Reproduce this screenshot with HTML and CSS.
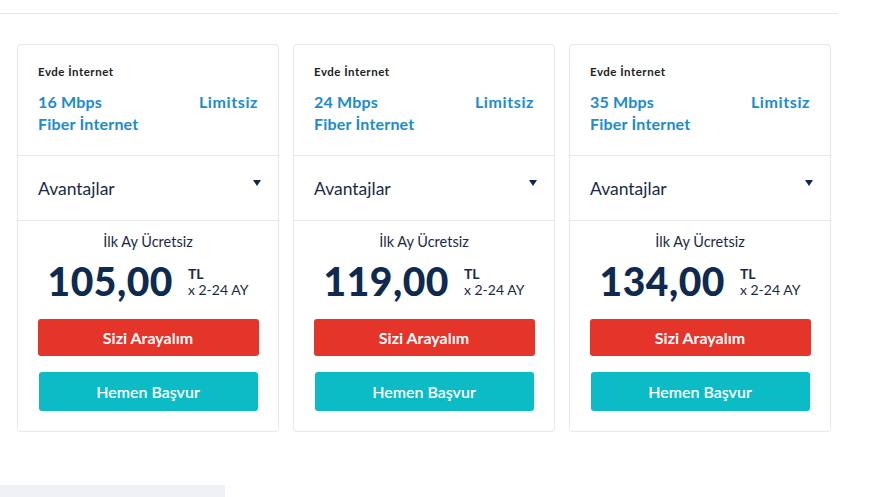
FILE: index.html
```html
<!DOCTYPE html>
<html lang="tr">
<head>
    <meta charset="UTF-8">
    <meta name="viewport" content="width=device-width, initial-scale=1.0">
    <title>Evde İnternet Paketleri</title>
    <link rel="stylesheet" href="styles.css">
</head>
<body>
<div class="page">
    <!-- Top divider -->
    <div class="top-line"></div>

    <!-- Tariff cards -->
    <div class="cards">
        <div class="card">
            <div class="card-head">
                <div class="kicker">Evde İnternet</div>
                <div class="plan">
                    <div class="plan-name">16 Mbps<br>Fiber İnternet</div>
                    <div class="plan-quota">Limitsiz</div>
                </div>
            </div>
            <div class="perks">
                <span>Avantajlar</span>
                <span class="caret"></span>
            </div>
            <div class="card-price">
                <div class="promo">İlk Ay Ücretsiz</div>
                <div class="price-row">
                    <div class="amount">105,00</div>
                    <div class="unit">
                        <b>TL</b>
                        <span>x 2-24 AY</span>
                    </div>
                </div>
                <button class="btn btn-call">Sizi Arayalım</button>
                <button class="btn btn-apply">Hemen Başvur</button>
            </div>
        </div>

        <div class="card">
            <div class="card-head">
                <div class="kicker">Evde İnternet</div>
                <div class="plan">
                    <div class="plan-name">24 Mbps<br>Fiber İnternet</div>
                    <div class="plan-quota">Limitsiz</div>
                </div>
            </div>
            <div class="perks">
                <span>Avantajlar</span>
                <span class="caret"></span>
            </div>
            <div class="card-price">
                <div class="promo">İlk Ay Ücretsiz</div>
                <div class="price-row">
                    <div class="amount">119,00</div>
                    <div class="unit">
                        <b>TL</b>
                        <span>x 2-24 AY</span>
                    </div>
                </div>
                <button class="btn btn-call">Sizi Arayalım</button>
                <button class="btn btn-apply">Hemen Başvur</button>
            </div>
        </div>

        <div class="card">
            <div class="card-head">
                <div class="kicker">Evde İnternet</div>
                <div class="plan">
                    <div class="plan-name">35 Mbps<br>Fiber İnternet</div>
                    <div class="plan-quota">Limitsiz</div>
                </div>
            </div>
            <div class="perks">
                <span>Avantajlar</span>
                <span class="caret"></span>
            </div>
            <div class="card-price">
                <div class="promo">İlk Ay Ücretsiz</div>
                <div class="price-row">
                    <div class="amount">134,00</div>
                    <div class="unit">
                        <b>TL</b>
                        <span>x 2-24 AY</span>
                    </div>
                </div>
                <button class="btn btn-call">Sizi Arayalım</button>
                <button class="btn btn-apply">Hemen Başvur</button>
            </div>
        </div>
    </div>

    <!-- Next section starts -->
    <div class="next-block"></div>
</div>
</body>
</html>
```

FILE: styles.css
```css
/* Global styles */
* {
    margin: 0;
    padding: 0;
    box-sizing: border-box;
}

body {
    font-family: Lato, "Open Sans", Arial, sans-serif;
    background-color: #fff;
    color: #10284d;
    overflow: hidden;
}

.page {
    height: 497px;
}

.top-line {
    width: 838px;
    height: 14px;
    border-bottom: 1px solid #e6e6e6;
}

/* Cards */
.cards {
    display: flex;
    gap: 14px;
    padding-left: 17px;
    margin-top: 30px;
}

.card {
    width: 262px;
    height: 388px;
    border: 1px solid #e8e8e8;
    border-radius: 4px;
    display: flex;
    flex-direction: column;
}

.card-head {
    padding: 20px 20px 20px 20px;
    border-bottom: 1px solid #e8e8e8;
    height: 111px;
}

.kicker {
    font-size: 11.5px;
    font-weight: bold;
    line-height: 14px;
    letter-spacing: 0.5px;
    color: #222;
}

.plan {
    display: flex;
    justify-content: space-between;
    margin-top: 12px;
    font-size: 16px;
    font-weight: bold;
    line-height: 22px;
    letter-spacing: 0.2px;
    color: #1a8ccf;
}

.plan-quota {
    letter-spacing: 0.6px;
}

.perks {
    height: 65px;
    border-bottom: 1px solid #e8e8e8;
    display: flex;
    justify-content: space-between;
    align-items: center;
    padding: 0 17px 0 20px;
    font-size: 17.5px;
    color: #1e2a45;
}

.caret {
    width: 0;
    height: 0;
    border-left: 4px solid transparent;
    border-right: 4px solid transparent;
    border-top: 6px solid #10284d;
    margin-top: -10px;
}

.card-price {
    flex: 1;
    display: flex;
    flex-direction: column;
    align-items: center;
    padding: 11px 20px 20px;
}

.promo {
    font-size: 14.5px;
    line-height: 19px;
    color: #1e2a45;
}

.price-row {
    display: flex;
    align-items: center;
    gap: 15px;
    margin-top: 7px;
    height: 46px;
}

.amount {
    font-size: 39px;
    font-weight: 900;
    color: #0f2a50;
    letter-spacing: 0.5px;
}

.unit {
    display: flex;
    flex-direction: column;
    font-size: 14px;
    line-height: 16px;
    color: #1e2a45;
    margin-top: 1px;
}

.unit b {
    font-size: 14px;
}

.btn {
    width: 221px;
    border: none;
    border-radius: 3px;
    color: white;
    font-family: inherit;
    font-size: 16px;
    font-weight: bold;
    cursor: pointer;
}

.btn-call {
    height: 37px;
    margin-top: 15px;
    background-color: #e5342a;
}

.btn-apply {
    width: 219px;
    height: 39px;
    margin-top: 16px;
    background-color: #0bbcc7;
    font-weight: 600;
}

.next-block {
    width: 225px;
    height: 20px;
    margin-top: 53px;
    background-color: #eef0f4;
}
```
